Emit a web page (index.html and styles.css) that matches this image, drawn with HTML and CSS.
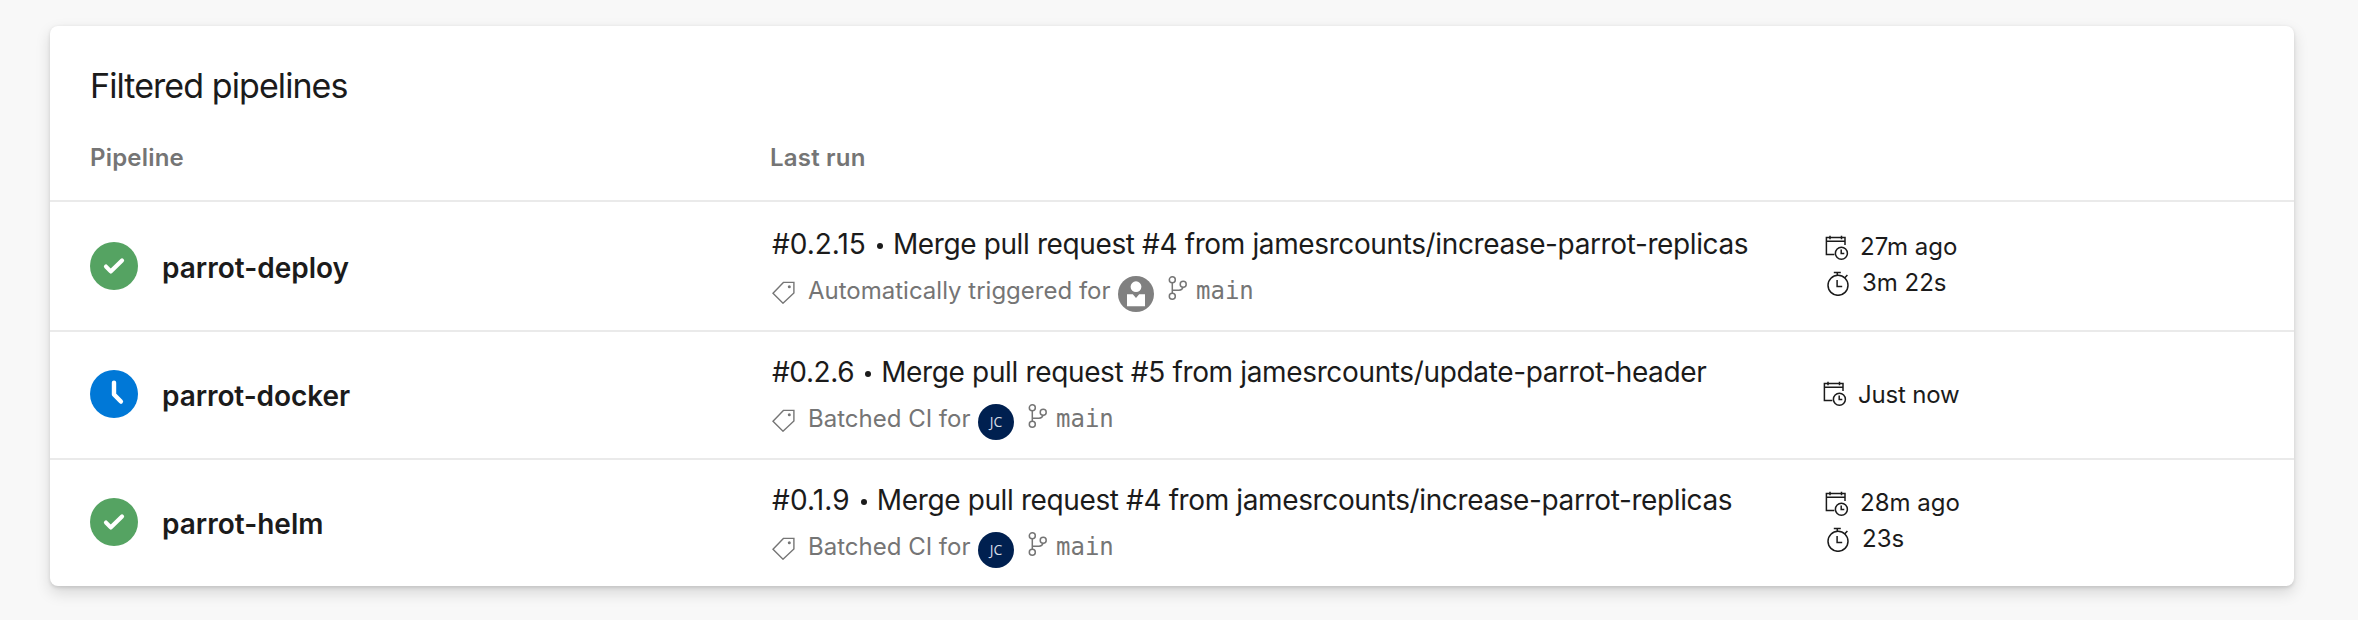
FILE: index.html
```html
<!DOCTYPE html>
<html lang="en">
<head>
<meta charset="utf-8">
<title>Pipelines</title>
<link rel="stylesheet" href="styles.css">
</head>
<body>
<svg class="defs" width="0" height="0" aria-hidden="true">
  <symbol id="ok" viewBox="0 0 48 48"><circle cx="24" cy="24" r="24" fill="#55a362"/><path d="M16 24.6 20.7 29.4 32 18.4" fill="none" stroke="#fff" stroke-width="4.2" stroke-linecap="round" stroke-linejoin="round"/></symbol>
  <symbol id="waiting" viewBox="0 0 48 48"><circle cx="24" cy="24" r="24" fill="#0078d7"/><path d="M24 12.6V24.4L30.9 31.6" fill="none" stroke="#fff" stroke-width="4.4" stroke-linecap="round" stroke-linejoin="round"/></symbol>
  <symbol id="tag" viewBox="0 0 24 24"><path d="M2 13.2 12.4 2.4H22.9V12.9L12 23.2Z" fill="none" stroke="currentColor" stroke-width="1.4"/><circle cx="18.3" cy="6.8" r="1.5" fill="currentColor"/></symbol>
  <symbol id="branch" viewBox="0 0 20 24"><g fill="none" stroke="currentColor" stroke-width="1.5"><circle cx="4.3" cy="3.8" r="3"/><circle cx="15.2" cy="8.2" r="3"/><circle cx="4.3" cy="20.2" r="3"/><path d="M4.3 6.8V17.2M15 11.2C14.6 13.2 13.2 14.3 11 14.3H4.3"/></g></symbol>
  <symbol id="calendar" viewBox="0 0 24 26"><g fill="none" stroke="currentColor" stroke-width="1.5"><path d="M9.4 19.4H1.4V2.6H20V10M1.4 6.3H20M5 .8V4.3M16.5 .8V4.3"/><circle cx="16.4" cy="18.2" r="6"/><path d="M16.2 14.6V18.5H19.3"/></g></symbol>
  <symbol id="stopwatch" viewBox="0 0 24 26"><g fill="none" stroke="currentColor" stroke-width="1.5"><circle cx="13" cy="15.3" r="10"/><path d="M8.8 2.6H15.8M12.3 2.6V5.3M19.6 7.9 22.4 5M12.1 10V16.6H17.2"/></g></symbol>
  <symbol id="person" viewBox="0 0 36 36"><circle cx="18" cy="18" r="18" fill="#808080"/><circle cx="18" cy="10.7" r="5.4" fill="#fff"/><path d="M9 18.3H14.8L18 22 21.2 18.3H27V30.2H9Z" fill="#fff"/></symbol>
</svg>

<main class="card">
  <h1 class="title">Filtered pipelines</h1>
  <div class="grid head"><span>Pipeline</span><span>Last run</span></div>

  <div class="grid row row-first">
    <div class="pipeline"><svg class="status"><use href="#ok"/></svg><span class="name">parrot-deploy</span></div>
    <div class="run">
      <div class="message"><span>#0.2.15</span><i class="dot"></i><span class="commit">Merge pull request #4 from jamesrcounts/increase-parrot-replicas</span></div>
      <div class="details"><svg class="tag"><use href="#tag"/></svg><span class="reason auto">Automatically triggered for</span><svg class="avatar"><use href="#person"/></svg><svg class="branch"><use href="#branch"/></svg><span class="ref">main</span></div>
    </div>
    <div class="times">
      <div class="time"><svg class="time-icon"><use href="#calendar"/></svg><span>27m ago</span></div>
      <div class="time lower"><svg class="time-icon"><use href="#stopwatch"/></svg><span>3m 22s</span></div>
    </div>
  </div>

  <div class="grid row">
    <div class="pipeline"><svg class="status"><use href="#waiting"/></svg><span class="name docker">parrot-docker</span></div>
    <div class="run">
      <div class="message"><span class="number-tight">#0.2.6</span><i class="dot"></i><span class="commit update">Merge pull request #5 from jamesrcounts/update-parrot-header</span></div>
      <div class="details"><svg class="tag"><use href="#tag"/></svg><span class="reason">Batched CI for</span><span class="avatar initials">JC</span><svg class="branch"><use href="#branch"/></svg><span class="ref">main</span></div>
    </div>
    <div class="times single">
      <div class="time now"><svg class="time-icon"><use href="#calendar"/></svg><span>Just now</span></div>
    </div>
  </div>

  <div class="grid row">
    <div class="pipeline"><svg class="status"><use href="#ok"/></svg><span class="name">parrot-helm</span></div>
    <div class="run">
      <div class="message"><span class="number-loose">#0.1.9</span><i class="dot"></i><span class="commit">Merge pull request #4 from jamesrcounts/increase-parrot-replicas</span></div>
      <div class="details"><svg class="tag"><use href="#tag"/></svg><span class="reason">Batched CI for</span><span class="avatar initials">JC</span><svg class="branch"><use href="#branch"/></svg><span class="ref">main</span></div>
    </div>
    <div class="times">
      <div class="time"><svg class="time-icon"><use href="#calendar"/></svg><span>28m ago</span></div>
      <div class="time lower"><svg class="time-icon"><use href="#stopwatch"/></svg><span>23s</span></div>
    </div>
  </div>
</main>
</body>
</html>
```
FILE: styles.css
```css
* { box-sizing: border-box; }
body {
  margin: 0;
  padding: 26px 64px 34px 50px;
  height: 620px;
  background: #f8f8f8;
  color: #1b1b1b;
  font-family: Inter, "Liberation Sans", sans-serif;
  overflow: hidden;
}
svg { display: block; flex: none; }
.defs { display: none; }
.card {
  height: 560px;
  background: #fff;
  border-radius: 8px;
  box-shadow: 0 6.4px 14.4px rgba(0, 0, 0, .132), 0 1.2px 3.6px rgba(0, 0, 0, .108);
}
.title {
  margin: 0;
  padding: 40px 0 0 40px;
  font-size: 34px;
  line-height: 40px;
  font-weight: 400;
  letter-spacing: -.92px;
}
.grid {
  display: grid;
  grid-template-columns: 680px 1050px 1fr;
  padding-left: 40px;
}
.head {
  height: 96px;
  padding-top: 36px;
  border-bottom: 2px solid #eaeaea;
  color: #757575;
  font-size: 24px;
  line-height: 32px;
  font-weight: 600;
  letter-spacing: .2px;
}
.row { height: 128px; }
.row-first { padding-top: 2px; }
.row + .row { border-top: 2px solid #eaeaea; }
.pipeline { display: flex; align-items: flex-start; gap: 24px; padding-top: 38px; }
.status { width: 48px; height: 48px; }
.name { padding-top: 6px; font-size: 28px; line-height: 40px; font-weight: 600; }
.docker { letter-spacing: -.08px; }
.run { padding: 20px 0 0 2px; }
.message { display: flex; align-items: center; height: 40px; font-size: 28px; line-height: 40px; white-space: nowrap; }
.number-tight { letter-spacing: -.4px; }
.number-loose { letter-spacing: .15px; }
.dot { width: 6px; height: 6px; margin: 4px 10px 0 11px; border-radius: 50%; background: currentColor; }
.commit { letter-spacing: -.38px; }
.update { letter-spacing: -.355px; }
.details { display: flex; align-items: flex-start; margin-top: 12px; color: #757575; font-size: 24px; line-height: 30px; white-space: nowrap; }
.tag { width: 24px; height: 24px; margin: 4px 13px 0 -1px; }
.reason { width: 170px; }
.auto { width: 310px; }
.avatar { width: 36px; height: 36px; margin-right: 14px; }
.initials {
  border-radius: 50%;
  background: #002050;
  color: #d5dce6;
  font: 14px/35px "Open Sans", sans-serif;
  text-align: center;
}
.branch { width: 20px; height: 24px; margin-right: 8px; }
.ref { font-family: "DejaVu Sans Mono", monospace; }
.times { padding-top: 25px; font-size: 24px; line-height: 36px; }
.single { padding-top: 45px; }
.time { display: flex; gap: 11px; padding-left: 5px; white-space: nowrap; }
.lower { gap: 13px; }
.now { padding-left: 3px; letter-spacing: -.2px; }
.time-icon { width: 24px; height: 26px; margin-top: 6px; }
.lower .time-icon { margin-top: 5px; }
.single .time-icon { margin-top: 4px; }
```
